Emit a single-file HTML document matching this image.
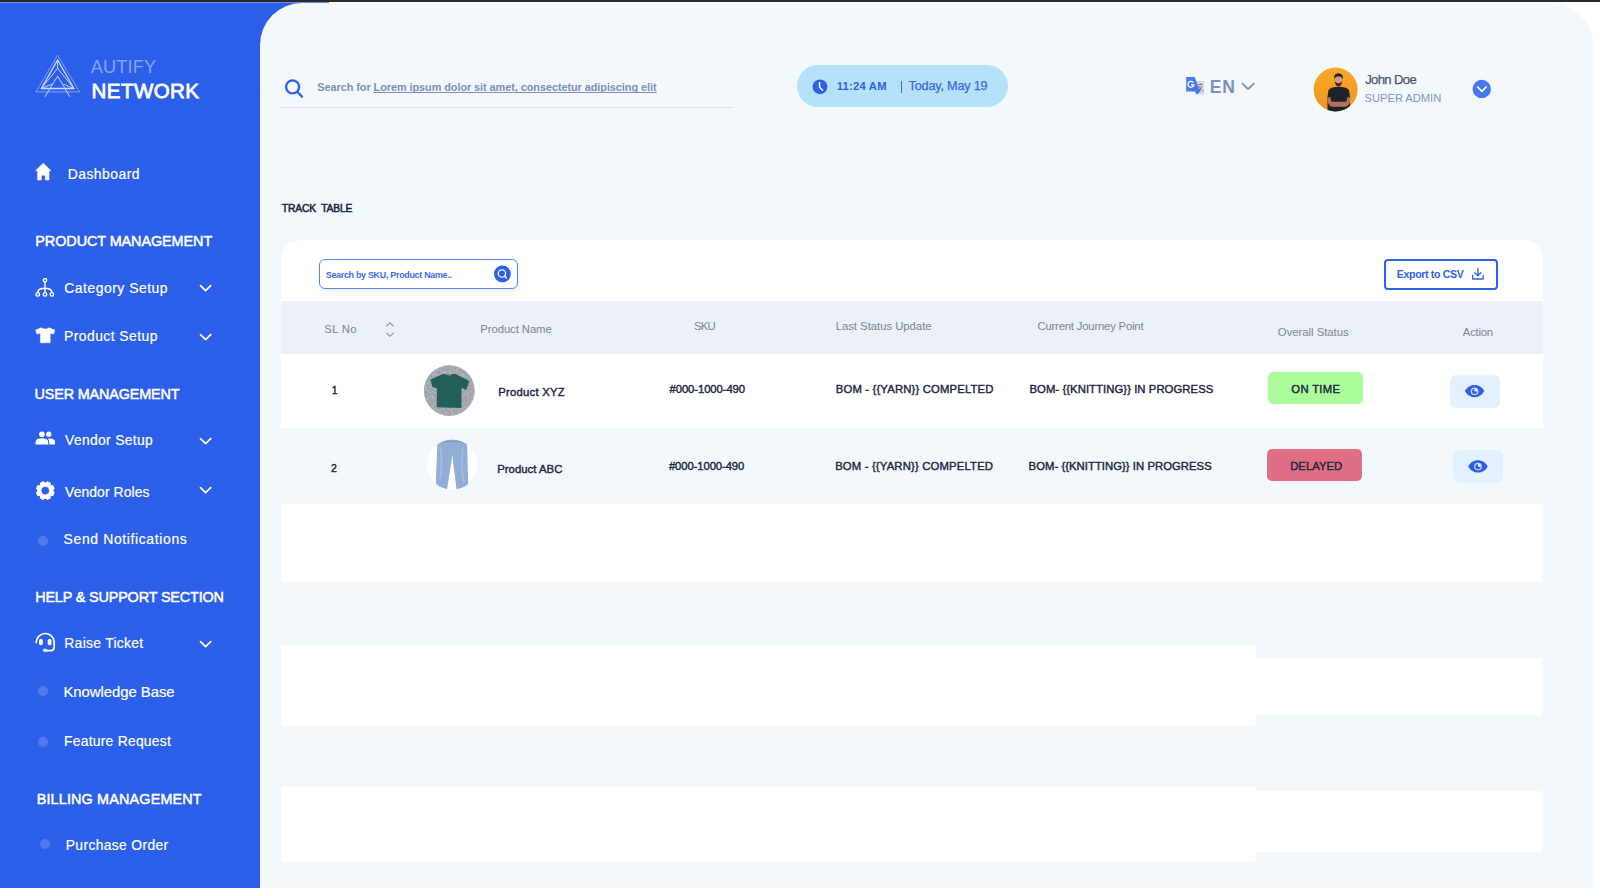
<!DOCTYPE html>
<html><head><meta charset="utf-8">
<style>
*{margin:0;padding:0;box-sizing:border-box}
html,body{width:1600px;height:888px;overflow:hidden;background:#fff;font-family:"Liberation Sans",sans-serif}
.s,.b{position:absolute;display:block}
.t{position:absolute;white-space:nowrap;line-height:1}
.bl{display:inline-block;width:0;height:0;vertical-align:baseline}
u{text-decoration-thickness:1px}
</style></head>
<body>

<div class="b" style="left:0;top:0;width:1600px;height:2px;background:#2A2A2A"></div>
<div class="b" style="left:0;top:2px;width:329px;height:886px;background:#2D60EA"></div>
<div class="b" style="left:0;top:2px;width:329px;height:1px;background:#6E8FE0"></div>
<div class="b" style="left:260px;top:2.5px;width:1334px;height:885.5px;background:#F3F8FD;border-radius:42px 45px 0 0"></div>

<!-- logo -->
<svg class="s" style="left:30px;top:50px" width="60" height="50" viewBox="30 50 60 50">
 <g fill="none" stroke="#CFDBFB" stroke-width="0.9" stroke-linecap="round" stroke-linejoin="round">
  <path d="M57.6 55.3 L79.5 91.9 L35.9 91.9 Z" stroke-dasharray="0.9 1.1" stroke="#A9BEF7" stroke-width="0.8"/>
  <path d="M57.6 60 L73.9 88.5 L41.3 88.5 Z" stroke-width="1.3"/>
  <path d="M57.6 60 L57.6 68.3 M41.3 88.5 L57.6 68.3 L73.9 88.5"/>
  <path d="M45.2 96.4 L57.6 76.2 L69.7 96.4 M41.3 88.5 L51.7 84.3 M73.9 88.5 L63.8 84.3"/>
 </g>
</svg>

<!-- sidebar icons -->
<svg class="s" style="left:35px;top:163px" width="17" height="18" viewBox="0 0 17 18"><path d="M8.3 0.2 L16 7.7 L14 7.7 L14 17 L10.3 17 L10.3 12.2 L6.3 12.2 L6.3 17 L2.6 17 L2.6 7.7 L0.6 7.7 Z" fill="#fff" stroke="#fff" stroke-width="0.6" stroke-linejoin="round"/></svg>

<svg class="s" style="left:35px;top:278px" width="20" height="20" viewBox="0 0 20 20"><g fill="none" stroke="#fff" stroke-width="1.4"><circle cx="10" cy="2.3" r="1.7"/><path d="M10 4 V14.6 M10 10.3 Q2.8 10.3 2.8 14.6 M10 10.3 Q16.9 10.3 16.9 14.6"/><circle cx="2.8" cy="16.4" r="1.75"/><circle cx="10" cy="16.4" r="1.75"/><circle cx="16.9" cy="16.4" r="1.75"/></g></svg>

<svg class="s" style="left:35px;top:327px" width="21" height="17" viewBox="0 0 21 17"><path d="M6.2 0.8 Q10.2 3.4 14.2 0.8 L19.8 3.1 L18.7 7 L15.2 6.3 L15.2 15.8 L5.4 15.8 L5.4 6.3 L1.8 7 L0.6 3.1 Z" fill="#fff" stroke="#fff" stroke-width="0.5" stroke-linejoin="round"/></svg>

<svg class="s" style="left:35px;top:431px" width="21" height="14" viewBox="0 0 21 14"><g fill="#fff"><circle cx="6.9" cy="3.2" r="2.8"/><circle cx="13.8" cy="3.2" r="2.6"/><path d="M0.6 13.4 V11.2 Q0.6 7.3 6.9 7.3 Q13.2 7.3 13.2 11.2 V13.4 Z"/><path d="M14.3 13.4 V11.2 Q14.3 9 12.9 7.7 Q20 7 20 11.2 V13.4 Z"/></g></svg>

<svg class="s" style="left:35px;top:481px" width="21" height="20" viewBox="0 0 21 20"><path fill="#fff" stroke="#fff" stroke-width="1" stroke-linejoin="round" fill-rule="evenodd" d="M17.95 10.51 L19.23 11.38 L17.87 14.66 L16.35 14.37 L15.07 15.65 L15.36 17.17 L12.08 18.53 L11.21 17.25 L9.39 17.25 L8.52 18.53 L5.24 17.17 L5.53 15.65 L4.25 14.37 L2.73 14.66 L1.37 11.38 L2.65 10.51 L2.65 8.69 L1.37 7.82 L2.73 4.54 L4.25 4.83 L5.53 3.55 L5.24 2.03 L8.52 0.67 L9.39 1.95 L11.21 1.95 L12.08 0.67 L15.36 2.03 L15.07 3.55 L16.35 4.83 L17.87 4.54 L19.23 7.82 L17.95 8.69 Z M10.30 5.30 A4.30 4.30 0 1 0 10.30 13.90 A4.30 4.30 0 1 0 10.30 5.30 Z"/></svg>

<svg class="s" style="left:35px;top:631px" width="21" height="22" viewBox="0 0 21 22"><path d="M1.3 11.6 A8.95 8.95 0 0 1 19.15 10.5 V16.3 Q19.15 19.6 15.8 19.6 H10.5" fill="none" stroke="#fff" stroke-width="1.7" stroke-linecap="round"/><g fill="#fff"><rect x="4" y="7.9" width="3.8" height="6.4" rx="1.7"/><rect x="12.7" y="7.9" width="3.9" height="6.4" rx="1.7"/><rect x="8" y="17.8" width="4.4" height="3" rx="1.5"/></g></svg>

<svg class="s" style="left:198.6px;top:284px" width="15" height="10" viewBox="0 0 15 10"><path d="M1.5 1.6 L6.6 6.7 L11.7 1.6" fill="none" stroke="#fff" stroke-width="1.7" stroke-linecap="round" stroke-linejoin="round"/></svg>
<svg class="s" style="left:198.6px;top:333px" width="15" height="10" viewBox="0 0 15 10"><path d="M1.5 1.6 L6.6 6.7 L11.7 1.6" fill="none" stroke="#fff" stroke-width="1.7" stroke-linecap="round" stroke-linejoin="round"/></svg>
<svg class="s" style="left:198.6px;top:437px" width="15" height="10" viewBox="0 0 15 10"><path d="M1.5 1.6 L6.6 6.7 L11.7 1.6" fill="none" stroke="#fff" stroke-width="1.7" stroke-linecap="round" stroke-linejoin="round"/></svg>
<svg class="s" style="left:198.6px;top:486px" width="15" height="10" viewBox="0 0 15 10"><path d="M1.5 1.6 L6.6 6.7 L11.7 1.6" fill="none" stroke="#fff" stroke-width="1.7" stroke-linecap="round" stroke-linejoin="round"/></svg>
<svg class="s" style="left:199.2px;top:639.7px" width="15" height="10" viewBox="0 0 15 10"><path d="M1.5 1.6 L6.6 6.7 L11.7 1.6" fill="none" stroke="#fff" stroke-width="1.7" stroke-linecap="round" stroke-linejoin="round"/></svg>

<div class="b" style="left:37.8px;top:536px;width:10.3px;height:10.3px;border-radius:50%;background:#5079F0"></div>
<div class="b" style="left:37.8px;top:686px;width:10.3px;height:10.3px;border-radius:50%;background:#5079F0"></div>
<div class="b" style="left:37.8px;top:737px;width:10.3px;height:10.3px;border-radius:50%;background:#5079F0"></div>
<div class="b" style="left:39.8px;top:839px;width:10.3px;height:10.3px;border-radius:50%;background:#5079F0"></div>

<!-- header -->
<svg class="s" style="left:283px;top:78px" width="22" height="22" viewBox="283 78 22 22"><g fill="none" stroke="#2D5FE8" stroke-width="2.3" stroke-linecap="round"><circle cx="292.6" cy="86.9" r="6.5"/><path d="M297.4 92 L302 96.6"/></g></svg>
<div class="b" style="left:281.4px;top:107px;width:452px;height:1px;background:#D9E3F6"></div>

<div class="b" style="left:797.2px;top:65.2px;width:210.8px;height:42.3px;border-radius:21.2px;background:#B5E1FB"></div>
<svg class="s" style="left:811px;top:78px" width="18" height="18" viewBox="811 78 18 18"><circle cx="820" cy="86.85" r="7.4" fill="#2D5FE8"/><path d="M819.6 82.6 V87.3 L822.6 90.2" fill="none" stroke="#fff" stroke-width="1.5" stroke-linecap="round" stroke-linejoin="round"/></svg>

<svg class="s" style="left:1184px;top:75px" width="22" height="22" viewBox="1184 75 22 22">
 <rect x="1196.4" y="81" width="7.8" height="13.6" fill="#D8DCE2"/>
 <path d="M1186.2 77.1 H1194.6 L1200.6 91.4 H1186.2 Z" fill="#4A7BEF"/>
 <path d="M1195 91.2 L1200.6 91.2 L1196.6 94.6 Z" fill="#3A68E0"/>
 <path d="M1193.3 82.5 A3 3 0 1 0 1193.8 85 H1191.2" fill="none" stroke="#fff" stroke-width="1.3"/>
 <path d="M1198.5 84.5 H1202.5 M1200.5 83.5 V85 M1199 86 Q1201 90 1203 91.5 M1202 86 Q1200.5 89.5 1198.5 91" fill="none" stroke="#555" stroke-width="0.7"/>
</svg>
<svg class="s" style="left:1240px;top:81px" width="16" height="10" viewBox="1240 81 16 10"><path d="M1242.4 83.6 L1248.1 89.1 L1253.8 83.6" fill="none" stroke="#7A93BD" stroke-width="1.9" stroke-linecap="round" stroke-linejoin="round"/></svg>

<svg class="s" style="left:1313px;top:67px" width="46" height="46" viewBox="1313 67 46 46">
 <defs><linearGradient id="og" x1="0" y1="0" x2="0" y2="1"><stop offset="0" stop-color="#F8A929"/><stop offset="1" stop-color="#EE961C"/></linearGradient>
 <clipPath id="ac"><circle cx="1335.6" cy="89.5" r="22"/></clipPath></defs>
 <circle cx="1335.6" cy="89.5" r="22" fill="url(#og)"/>
 <g clip-path="url(#ac)">
  <rect x="1336.5" y="84" width="4" height="4.5" fill="#B97A5E"/>
  <path d="M1328.5 90 Q1331 87.2 1335 87 L1342 87 Q1346.5 87.2 1349 90 L1350 97 L1350 112 L1327.5 112 L1327.5 97 Z" fill="#1F2227"/>
  <path d="M1327.3 98 Q1327.3 106.5 1333 106.8 L1345 106.8 Q1350.3 106.5 1350.3 98 L1347.6 96.8 L1346.2 101.8 L1331.5 101.8 L1330.2 96.8 Z" fill="#B5725A"/>
  <ellipse cx="1338.5" cy="79.8" rx="4.2" ry="5.4" fill="#D49A80"/>
  <path d="M1334.1 79.5 Q1333.6 73.3 1338.5 73.3 Q1343.4 73.3 1342.9 79.5 Q1341.5 76.3 1338.5 76.3 Q1335.5 76.3 1334.1 79.5 Z" fill="#2A1E1A"/>
  <path d="M1334.8 81.3 Q1335.2 86.3 1338.5 86.3 Q1341.8 86.3 1342.2 81.3 Q1340.5 83.4 1338.5 83.2 Q1336.5 83.4 1334.8 81.3 Z" fill="#3B2A23"/>
 </g>
</svg>
<svg class="s" style="left:1472px;top:79px" width="20" height="20" viewBox="1472 79 20 20"><circle cx="1481.75" cy="88.9" r="9.2" fill="#4478EE"/><path d="M1477.7 87 L1481.9 91.3 L1486.1 87" fill="none" stroke="#fff" stroke-width="1.7" stroke-linecap="round" stroke-linejoin="round"/></svg>

<!-- card -->
<div class="b" style="left:281px;top:240px;width:1261.6px;height:70px;background:#fff;border-radius:20px 20px 0 0"></div>
<div class="b" style="left:318.9px;top:258.6px;width:199.1px;height:30.8px;border:1.8px solid #5A87EE;border-radius:6px;background:#fff;box-shadow:0 3px 4px rgba(40,60,110,0.07)"></div>
<svg class="s" style="left:493px;top:265px" width="19" height="18" viewBox="493 265 19 18"><circle cx="502.4" cy="274" r="8.4" fill="#2D5FE8"/><g fill="none" stroke="#fff" stroke-width="1.25" stroke-linecap="round"><circle cx="501.9" cy="273.5" r="3.7"/><path d="M504.6 276.2 L506.4 278"/></g></svg>

<div class="b" style="left:1384.3px;top:258.75px;width:113.5px;height:31px;border:2px solid #2F62EA;border-radius:4px;background:#fff"></div>
<svg class="s" style="left:1471px;top:267px" width="14" height="14" viewBox="1471 267 14 14"><g fill="none" stroke="#2F62EA" stroke-width="1.3" stroke-linecap="round" stroke-linejoin="round"><path d="M1477.9 268.6 V275.6 M1474.9 272.7 L1477.9 275.7 L1480.9 272.7 M1472.6 275.4 V279 H1483.2 V275.4"/></g></svg>

<div class="b" style="left:281px;top:300.8px;width:1261.6px;height:52.8px;background:#EBF0F9"></div>
<svg class="s" style="left:385px;top:321px" width="10" height="17" viewBox="385 321 10 17"><g fill="none" stroke="#8C93A2" stroke-width="1.1" stroke-linecap="round"><path d="M386.6 326 L390 322.9 L393.4 326 M386.6 333.2 L390 336.3 L393.4 333.2"/></g></svg>

<!-- rows -->
<div class="b" style="left:281px;top:353.6px;width:1261.6px;height:74.4px;background:#fff"></div>
<div class="b" style="left:281px;top:428px;width:1261.6px;height:75.9px;background:#F3F8FD"></div>
<div class="b" style="left:281px;top:504px;width:1261.3px;height:78px;background:#fff"></div>
<div class="b" style="left:281px;top:645px;width:975.3px;height:80.5px;background:#fff"></div>
<div class="b" style="left:1256.3px;top:658px;width:286px;height:57px;background:#fff"></div>
<div class="b" style="left:281px;top:787px;width:975.3px;height:75px;background:#fff"></div>
<div class="b" style="left:1256.3px;top:791.3px;width:286px;height:60.7px;background:#fff"></div>

<svg class="s" style="left:423px;top:365px" width="53" height="52" viewBox="0 0 53 52">
 <defs><filter id="nz" x="0" y="0" width="100%" height="100%"><feTurbulence type="fractalNoise" baseFrequency="0.45" numOctaves="3" seed="5"/><feColorMatrix type="matrix" values="0 0 0 0 0.78  0 0 0 0 0.80  0 0 0 0 0.83  0 0 0 -2 1.3"/><feComposite in2="SourceGraphic" operator="in"/></filter>
 <clipPath id="c1"><circle cx="26.3" cy="25.65" r="25.4"/></clipPath></defs>
 <circle cx="26.3" cy="25.65" r="25.4" fill="#9CA1A8"/>
 <circle cx="26.3" cy="25.65" r="25.4" fill="#8E9298" filter="url(#nz)" opacity="0.4"/>
 <path d="M7.5 14.5 L20.5 8.8 Q26 10.8 32 8.8 L46.2 16 L43.2 25 L38.6 22.8 L38.4 43 L13.7 42.2 L13.9 23.4 L9.3 21.8 Z" fill="#225E5A"/>
 <path d="M24 9.8 Q26 11.2 28.5 9.8" fill="none" stroke="#C0553A" stroke-width="1.2"/>
</svg>

<svg class="s" style="left:426px;top:439px" width="53" height="52" viewBox="0 0 53 52">
 <defs><clipPath id="c2"><circle cx="26.2" cy="25.65" r="25.1"/></clipPath></defs>
 <circle cx="26.2" cy="25.65" r="25.1" fill="#FFFFFF"/>
 <g clip-path="url(#c2)">
  <path d="M11.5 1.2 Q26 -0.5 41 1.2 L42.3 49 L30.5 50.5 L26.3 16.5 L21 50.5 L9.6 49 Z" fill="#93AED6"/>
  <path d="M14 8 Q17 20 14 40 M37 10 Q34 24 38 44" fill="none" stroke="#A9BFE0" stroke-width="1.5"/>
  <path d="M11.8 3.2 Q26 1.5 40.8 3.2" fill="none" stroke="#7890BC" stroke-width="0.8"/>
 </g>
</svg>

<div class="b" style="left:1267.9px;top:371.5px;width:94.7px;height:32.5px;border-radius:5px;background:#ABFC9A"></div>
<div class="b" style="left:1266.9px;top:448.6px;width:95px;height:32.5px;border-radius:5px;background:#E06E84"></div>

<div class="b" style="left:1449.5px;top:375px;width:50.1px;height:32.5px;border-radius:6px;background:#E3F0FD"></div>
<div class="b" style="left:1453.2px;top:450.3px;width:49.8px;height:32.7px;border-radius:6px;background:#E3F0FD"></div>
<svg class="s" style="left:1462px;top:382px" width="24" height="18" viewBox="1462 382 24 18"><g transform="translate(1474.60 391.10) scale(0.873 0.81) translate(-12 -12)"><path d="M12 4.5C7 4.5 2.73 7.61 1 12c1.73 4.39 6 7.5 11 7.5s9.27-3.11 11-7.5c-1.73-4.39-6-7.5-11-7.5z" fill="#2D5FE8"/></g><circle cx="1474.60" cy="391.30" r="3.85" fill="#C9D8FA"/><path d="M1474.60 391.30 L1474.60 388.70 A2.6 2.6 0 1 0 1477.20 391.30 Z" fill="#2D5FE8"/><path d="M1474.60 391.30 L1474.60 388.70 A2.6 2.6 0 0 1 1477.20 391.30 Z" fill="#F4F8FF"/></svg><svg class="s" style="left:1466px;top:457px" width="24" height="18" viewBox="1466 457 24 18"><g transform="translate(1478.00 466.40) scale(0.873 0.81) translate(-12 -12)"><path d="M12 4.5C7 4.5 2.73 7.61 1 12c1.73 4.39 6 7.5 11 7.5s9.27-3.11 11-7.5c-1.73-4.39-6-7.5-11-7.5z" fill="#2D5FE8"/></g><circle cx="1478.00" cy="466.60" r="3.85" fill="#C9D8FA"/><path d="M1478.00 466.60 L1478.00 464.00 A2.6 2.6 0 1 0 1480.60 466.60 Z" fill="#2D5FE8"/><path d="M1478.00 466.60 L1478.00 464.00 A2.6 2.6 0 0 1 1480.60 466.60 Z" fill="#F4F8FF"/></svg>
<div class="b" style="left:900.6px;top:80.6px;width:1.4px;height:12.1px;background:#3B68E4"></div>
<div class="t" id="autify" style="left:90.83px;top:58.11px;font-size:18.17px;letter-spacing:0.129px;font-weight:normal;color:#86A3F1;">AUTIFY<i class="bl"></i></div>
<div class="t" id="network" style="left:91.62px;top:81.11px;font-size:20.49px;letter-spacing:0.444px;font-weight:normal;color:#FFFFFF;-webkit-text-stroke:0.8px #fff">NETWORK<i class="bl"></i></div>
<div class="t" id="dash" style="left:67.71px;top:167.51px;font-size:13.90px;letter-spacing:0.482px;font-weight:normal;color:#FFFFFF;-webkit-text-stroke:0.2px #fff">Dashboard<i class="bl"></i></div>
<div class="t" id="sec1" style="left:35.34px;top:234.41px;font-size:14.40px;letter-spacing:-0.070px;font-weight:normal;color:#FFFFFF;-webkit-text-stroke:0.5px #fff">PRODUCT MANAGEMENT<i class="bl"></i></div>
<div class="t" id="cat" style="left:64.23px;top:281.51px;font-size:13.90px;letter-spacing:0.521px;font-weight:normal;color:#FFFFFF;-webkit-text-stroke:0.2px #fff">Category Setup<i class="bl"></i></div>
<div class="t" id="prod" style="left:64.10px;top:330.01px;font-size:13.90px;letter-spacing:0.439px;font-weight:normal;color:#FFFFFF;-webkit-text-stroke:0.2px #fff">Product Setup<i class="bl"></i></div>
<div class="t" id="sec2" style="left:34.59px;top:387.11px;font-size:14.40px;letter-spacing:-0.158px;font-weight:normal;color:#FFFFFF;-webkit-text-stroke:0.5px #fff">USER MANAGEMENT<i class="bl"></i></div>
<div class="t" id="vset" style="left:65.11px;top:434.01px;font-size:13.90px;letter-spacing:0.320px;font-weight:normal;color:#FFFFFF;-webkit-text-stroke:0.2px #fff">Vendor Setup<i class="bl"></i></div>
<div class="t" id="vrol" style="left:65.11px;top:485.91px;font-size:13.90px;letter-spacing:0.082px;font-weight:normal;color:#FFFFFF;-webkit-text-stroke:0.2px #fff">Vendor Roles<i class="bl"></i></div>
<div class="t" id="notif" style="left:63.61px;top:532.51px;font-size:13.90px;letter-spacing:0.656px;font-weight:normal;color:#FFFFFF;-webkit-text-stroke:0.2px #fff">Send Notifications<i class="bl"></i></div>
<div class="t" id="sec3" style="left:35.15px;top:589.91px;font-size:14.40px;letter-spacing:-0.149px;font-weight:normal;color:#FFFFFF;-webkit-text-stroke:0.5px #fff">HELP &amp; SUPPORT SECTION<i class="bl"></i></div>
<div class="t" id="ticket" style="left:64.29px;top:636.51px;font-size:13.90px;letter-spacing:0.294px;font-weight:normal;color:#FFFFFF;-webkit-text-stroke:0.2px #fff">Raise Ticket<i class="bl"></i></div>
<div class="t" id="kb" style="left:63.38px;top:684.51px;font-size:14.90px;letter-spacing:-0.038px;font-weight:normal;color:#FFFFFF;-webkit-text-stroke:0.2px #fff">Knowledge Base<i class="bl"></i></div>
<div class="t" id="feat" style="left:63.97px;top:735.01px;font-size:13.90px;letter-spacing:0.244px;font-weight:normal;color:#FFFFFF;-webkit-text-stroke:0.2px #fff">Feature Request<i class="bl"></i></div>
<div class="t" id="sec4" style="left:36.69px;top:792.01px;font-size:14.40px;letter-spacing:0.155px;font-weight:normal;color:#FFFFFF;-webkit-text-stroke:0.5px #fff">BILLING MANAGEMENT<i class="bl"></i></div>
<div class="t" id="po" style="left:65.77px;top:838.76px;font-size:13.90px;letter-spacing:0.332px;font-weight:normal;color:#FFFFFF;-webkit-text-stroke:0.2px #fff">Purchase Order<i class="bl"></i></div>
<div class="t" id="srch" style="left:317.34px;top:81.60px;font-size:10.90px;letter-spacing:-0.061px;font-weight:bold;color:#7D8FB5;text-decoration-color:#A3B2D2;text-underline-offset:0.6px;text-decoration-skip-ink:none">Search for <u>Lorem ipsum dolor sit amet, consectetur adipiscing elit</u><i class="bl"></i></div>
<div class="t" id="time" style="left:836.72px;top:81.01px;font-size:11.19px;letter-spacing:0.238px;font-weight:bold;color:#2D5FE8;">11:24 AM<i class="bl"></i></div>
<div class="t" id="today" style="left:908.59px;top:80.01px;font-size:12.65px;letter-spacing:-0.192px;font-weight:normal;color:#3B68E4;-webkit-text-stroke:0.25px #3B68E4">Today, May 19<i class="bl"></i></div>
<div class="t" id="en" style="left:1209.67px;top:78.82px;font-size:17.51px;letter-spacing:0.862px;font-weight:bold;color:#7A93BD;">EN<i class="bl"></i></div>
<div class="t" id="john" style="left:1365.19px;top:72.76px;font-size:13.08px;letter-spacing:-0.634px;font-weight:normal;color:#4B5574;-webkit-text-stroke:0.25px #4B5574">John Doe<i class="bl"></i></div>
<div class="t" id="admin" style="left:1364.62px;top:93.11px;font-size:11.19px;letter-spacing:-0.045px;font-weight:normal;color:#7F97BF;">SUPER ADMIN<i class="bl"></i></div>
<div class="t" id="track" style="left:281.84px;top:204.01px;font-size:10.32px;letter-spacing:-0.189px;font-weight:normal;color:#1A2541;-webkit-text-stroke:0.5px #1A2541">TRACK&nbsp;&nbsp;TABLE<i class="bl"></i></div>
<div class="t" id="ph" style="left:325.76px;top:271.10px;font-size:8.87px;letter-spacing:-0.259px;font-weight:bold;color:#3D6AE6;">Search by SKU, Product Name..<i class="bl"></i></div>
<div class="t" id="csv" style="left:1396.84px;top:268.70px;font-size:10.61px;letter-spacing:-0.359px;font-weight:bold;color:#2F62EA;">Export to CSV<i class="bl"></i></div>
<div class="t" id="h1" style="left:324.35px;top:324.00px;font-size:11.30px;letter-spacing:0.308px;font-weight:normal;color:#7D8494;">SL No<i class="bl"></i></div>
<div class="t" id="h2" style="left:480.30px;top:324.00px;font-size:11.30px;letter-spacing:-0.071px;font-weight:normal;color:#7D8494;">Product Name<i class="bl"></i></div>
<div class="t" id="h3" style="left:693.89px;top:320.50px;font-size:11.30px;letter-spacing:-0.679px;font-weight:normal;color:#7D8494;">SKU<i class="bl"></i></div>
<div class="t" id="h4" style="left:835.69px;top:320.50px;font-size:11.30px;letter-spacing:-0.013px;font-weight:normal;color:#7D8494;">Last Status Update<i class="bl"></i></div>
<div class="t" id="h5" style="left:1037.48px;top:320.50px;font-size:11.30px;letter-spacing:-0.192px;font-weight:normal;color:#7D8494;">Current Journey Point<i class="bl"></i></div>
<div class="t" id="h6" style="left:1277.87px;top:327.00px;font-size:11.30px;letter-spacing:-0.014px;font-weight:normal;color:#7D8494;">Overall Status<i class="bl"></i></div>
<div class="t" id="h7" style="left:1462.86px;top:327.00px;font-size:11.30px;letter-spacing:-0.237px;font-weight:normal;color:#7D8494;">Action<i class="bl"></i></div>
<div class="t" id="r1n" style="left:331.71px;top:385.10px;font-size:10.50px;letter-spacing:0.000px;font-weight:normal;color:#1B2541;-webkit-text-stroke:0.4px #1B2541">1<i class="bl"></i></div>
<div class="t" id="r1p" style="left:498.13px;top:386.75px;font-size:11.30px;letter-spacing:0.249px;font-weight:normal;color:#1B2541;-webkit-text-stroke:0.4px #1B2541">Product XYZ<i class="bl"></i></div>
<div class="t" id="r1s" style="left:669.57px;top:383.72px;font-size:11.30px;letter-spacing:-0.097px;font-weight:normal;color:#1B2541;-webkit-text-stroke:0.4px #1B2541">#000-1000-490<i class="bl"></i></div>
<div class="t" id="r1l" style="left:835.77px;top:383.60px;font-size:11.30px;letter-spacing:0.157px;font-weight:normal;color:#1B2541;-webkit-text-stroke:0.4px #1B2541">BOM - {{YARN}} COMPELTED<i class="bl"></i></div>
<div class="t" id="r1c" style="left:1029.44px;top:383.50px;font-size:11.30px;letter-spacing:0.064px;font-weight:normal;color:#1B2541;-webkit-text-stroke:0.4px #1B2541">BOM- {{KNITTING}} IN PROGRESS<i class="bl"></i></div>
<div class="t" id="r1b" style="left:1291.30px;top:383.50px;font-size:11.30px;letter-spacing:0.324px;font-weight:normal;color:#1B2541;-webkit-text-stroke:0.4px #1B2541">ON TIME<i class="bl"></i></div>
<div class="t" id="r2n" style="left:331.07px;top:462.60px;font-size:10.50px;letter-spacing:0.000px;font-weight:normal;color:#1B2541;-webkit-text-stroke:0.4px #1B2541">2<i class="bl"></i></div>
<div class="t" id="r2p" style="left:497.23px;top:464.22px;font-size:11.30px;letter-spacing:0.046px;font-weight:normal;color:#1B2541;-webkit-text-stroke:0.4px #1B2541">Product ABC<i class="bl"></i></div>
<div class="t" id="r2s" style="left:668.90px;top:460.72px;font-size:11.30px;letter-spacing:-0.103px;font-weight:normal;color:#1B2541;-webkit-text-stroke:0.4px #1B2541">#000-1000-490<i class="bl"></i></div>
<div class="t" id="r2l" style="left:835.14px;top:460.60px;font-size:11.30px;letter-spacing:0.168px;font-weight:normal;color:#1B2541;-webkit-text-stroke:0.4px #1B2541">BOM - {{YARN}} COMPELTED<i class="bl"></i></div>
<div class="t" id="r2c" style="left:1028.62px;top:460.50px;font-size:11.30px;letter-spacing:0.036px;font-weight:normal;color:#1B2541;-webkit-text-stroke:0.4px #1B2541">BOM- {{KNITTING}} IN PROGRESS<i class="bl"></i></div>
<div class="t" id="r2b" style="left:1290.15px;top:460.60px;font-size:11.30px;letter-spacing:0.024px;font-weight:normal;color:#1B2541;-webkit-text-stroke:0.4px #1B2541">DELAYED<i class="bl"></i></div>
</body></html>
